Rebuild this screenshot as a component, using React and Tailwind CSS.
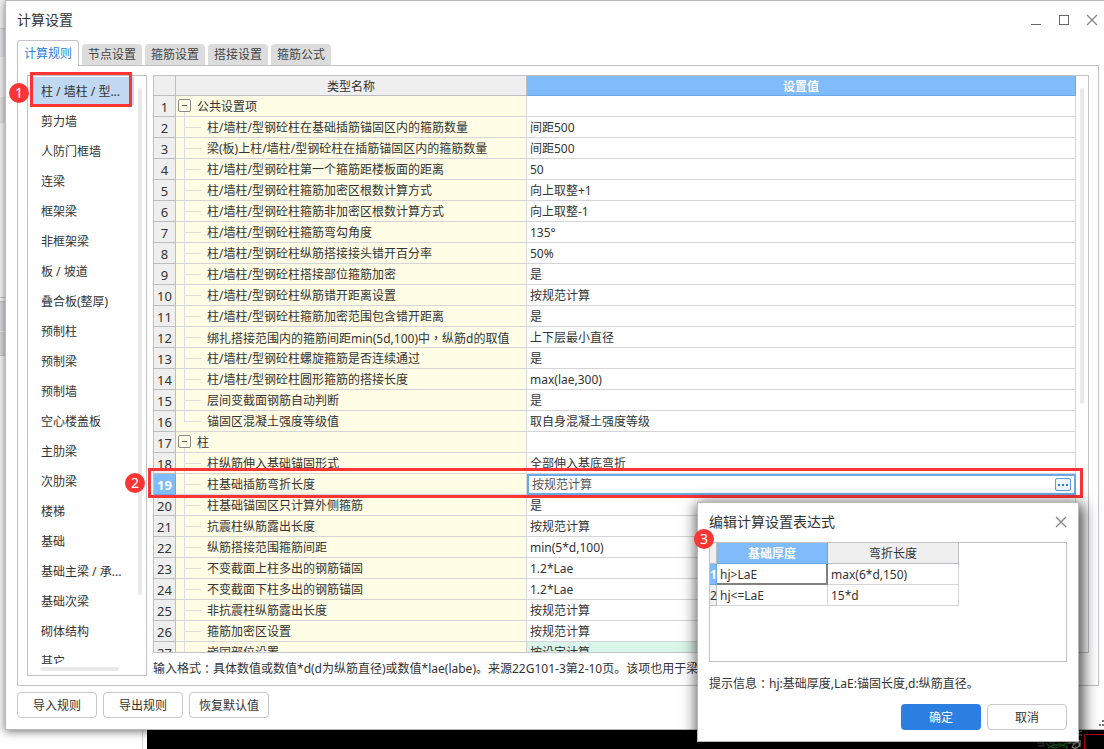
import React, { useState } from "react";

const TABS = ["计算规则", "节点设置", "箍筋设置", "搭接设置", "箍筋公式"];

const CATEGORIES = [
  "柱 / 墙柱 / 型...",
  "剪力墙",
  "人防门框墙",
  "连梁",
  "框架梁",
  "非框架梁",
  "板 / 坡道",
  "叠合板(整厚)",
  "预制柱",
  "预制梁",
  "预制墙",
  "空心楼盖板",
  "主肋梁",
  "次肋梁",
  "楼梯",
  "基础",
  "基础主梁 / 承...",
  "基础次梁",
  "砌体结构",
  "其它",
];

// sits in the middle of its box only in the TC face
const Punct = ({ children }) => <span className="font-['Noto_Sans_CJK_TC',sans-serif]">{children}</span>;

const ROWS = [
  { name: "公共设置项", group: true },
  { name: "柱/墙柱/型钢砼柱在基础插筋锚固区内的箍筋数量", value: "间距500" },
  { name: "梁(板)上柱/墙柱/型钢砼柱在插筋锚固区内的箍筋数量", value: "间距500" },
  { name: "柱/墙柱/型钢砼柱第一个箍筋距楼板面的距离", value: "50" },
  { name: "柱/墙柱/型钢砼柱箍筋加密区根数计算方式", value: "向上取整+1" },
  { name: "柱/墙柱/型钢砼柱箍筋非加密区根数计算方式", value: "向上取整-1" },
  { name: "柱/墙柱/型钢砼柱箍筋弯勾角度", value: "135°" },
  { name: "柱/墙柱/型钢砼柱纵筋搭接接头错开百分率", value: "50%" },
  { name: "柱/墙柱/型钢砼柱搭接部位箍筋加密", value: "是" },
  { name: "柱/墙柱/型钢砼柱纵筋错开距离设置", value: "按规范计算" },
  { name: "柱/墙柱/型钢砼柱箍筋加密范围包含错开距离", value: "是" },
  {
    name: (
      <>
        绑扎搭接范围内的箍筋间距min(5d,100)中<Punct>，</Punct>纵筋d的取值
      </>
    ),
    value: "上下层最小直径",
  },
  { name: "柱/墙柱/型钢砼柱螺旋箍筋是否连续通过", value: "是" },
  { name: "柱/墙柱/型钢砼柱圆形箍筋的搭接长度", value: "max(lae,300)" },
  { name: "层间变截面钢筋自动判断", value: "是" },
  { name: "锚固区混凝土强度等级值", value: "取自身混凝土强度等级", last: true },
  { name: "柱", group: true },
  { name: "柱纵筋伸入基础锚固形式", value: "全部伸入基底弯折" },
  { name: "柱基础插筋弯折长度", value: "按规范计算", active: true },
  { name: "柱基础锚固区只计算外侧箍筋", value: "是" },
  { name: "抗震柱纵筋露出长度", value: "按规范计算" },
  { name: "纵筋搭接范围箍筋间距", value: "min(5*d,100)" },
  { name: "不变截面上柱多出的钢筋锚固", value: "1.2*Lae" },
  { name: "不变截面下柱多出的钢筋锚固", value: "1.2*Lae" },
  { name: "非抗震柱纵筋露出长度", value: "按规范计算" },
  { name: "箍筋加密区设置", value: "按规范计算" },
  { name: "嵌固部位设置", value: "按设定计算", changed: true },
];

const CloseIcon = () => (
  <svg width="12" height="12" viewBox="0 0 12 12" fill="none" stroke="#858585" strokeWidth="1.3">
    <path d="M1 1 L11 11 M11 1 L1 11" />
  </svg>
);

const Badge = ({ n, className }) => (
  <span
    className={`absolute z-20 flex size-5 items-center justify-center rounded-full bg-[#fb3434] text-sm leading-none text-white ${className}`}
  >
    {n}
  </span>
);

const TitleBar = () => (
  <header className="flex h-[39px] shrink-0 items-center justify-between pb-0.5 pl-[11px] pr-1.5">
    <h1 className="text-sm">计算设置</h1>
    <div className="flex items-center gap-4">
      <button type="button" aria-label="最小化">
        <svg width="12" height="12" viewBox="0 0 12 12" stroke="#666" fill="none">
          <path d="M1 10.5 H11" />
        </svg>
      </button>
      <button type="button" aria-label="最大化">
        <svg width="12" height="12" viewBox="0 0 12 12" stroke="#666" fill="none">
          <rect x="1.5" y="1.5" width="9" height="9" />
        </svg>
      </button>
      <button type="button" aria-label="关闭">
        <CloseIcon />
      </button>
    </div>
  </header>
);

const Tabs = () => {
  const [tab, setTab] = useState(TABS[0]);

  return (
    <nav className="relative z-10 -mb-px flex h-[26px] shrink-0 items-end gap-[3px] pl-[11px]">
      {TABS.map((item) => (
        <button
          key={item}
          type="button"
          onClick={() => setTab(item)}
          className={
            item === tab
              ? "h-[26px] w-[62px] rounded-t border border-b-0 border-[#c3c3c7] bg-white text-[#2b7fe0]"
              : "mb-px h-[21px] w-[60px] rounded-t bg-[#dcdcdc] text-[#444]"
          }
        >
          {item}
        </button>
      ))}
    </nav>
  );
};

const Sidebar = () => {
  const [selected, setSelected] = useState(0);

  return (
    <aside className="relative flex w-[120px] shrink-0 flex-col border border-[#c3c3c7]">
      <div className="flex min-h-0 flex-1">
        <ul className="min-w-0 flex-1 overflow-hidden pl-[5px]">
          {CATEGORIES.map((item, i) => (
            <li key={item} className="flex h-[30px] items-center">
              <button
                type="button"
                onClick={() => setSelected(i)}
                className={`h-7 w-full whitespace-nowrap pl-2 pt-0.5 text-left ${
                  i === selected ? "bg-[#c0d8f1]" : ""
                }`}
              >
                {item}
              </button>
            </li>
          ))}
        </ul>
        <div className="w-3 pl-1 pt-3">
          <div className="h-[88%] w-1 rounded-full bg-[#e9e9e9]" />
        </div>
      </div>
      <div className="h-[11px] pl-3 pt-[3px]">
        <div className="h-1 w-[79px] rounded-full bg-[#e9e9e9]" />
      </div>
      <div className="pointer-events-none absolute -top-1 left-0.5 h-[35px] w-[102px] border-3 border-[#fb3434]" />
      <Badge n="1" className="-left-[19px] top-[7px]" />
    </aside>
  );
};

const TreeCell = ({ row }) =>
  row.group ? (
    <div className="flex h-5 items-center pl-0.5">
      <div className="flex h-5 w-[13px] flex-col items-center pt-[3px]">
        <button
          type="button"
          aria-label="折叠"
          className="flex size-[13px] shrink-0 items-center justify-center rounded-xs border border-[#8a8a8a]"
        >
          <span className="h-px w-[5px] bg-[#555]" />
        </button>
        <span className="w-px flex-1 bg-[#dedee2]" />
      </div>
      <span className="pl-1.5 pt-0.5">{row.name}</span>
    </div>
  ) : (
    <div className="flex h-5 items-center pl-2">
      <span className="flex h-5 w-[17px] shrink-0 flex-col">
        <span className="h-[11px] border-b border-l border-[#dedee2]" />
        {!row.last && <span className="flex-1 border-l border-[#dedee2]" />}
      </span>
      <span className="pl-1.5 pt-0.5">{row.name}</span>
    </div>
  );

const ValueCell = ({ row }) => {
  const [value, setValue] = useState(row.value);

  if (!row.active) return <div className="px-[3px] pt-0.5">{row.value}</div>;

  return (
    <div className="flex h-[21px] items-center border-2 border-[#6aa9e8] bg-white px-[3px]">
      <input
        type="text"
        aria-label={row.name}
        value={value}
        onChange={(e) => setValue(e.target.value)}
        className="min-w-0 flex-1 text-[#555] outline-none"
      />
      <button
        type="button"
        aria-label="编辑表达式"
        className="flex h-[13px] w-4 items-center justify-center gap-0.5 rounded-xs border border-[#5b9fe6] bg-[#eef5fd]"
      >
        <span className="size-0.5 bg-[#2b7fe0]" />
        <span className="size-0.5 bg-[#2b7fe0]" />
        <span className="size-0.5 bg-[#2b7fe0]" />
      </button>
    </div>
  );
};

const SettingsTable = () => (
  <div className="relative flex min-h-0 flex-1 border border-[#c3c3c7]">
    <div className="min-w-0 flex-1 overflow-hidden">
      <table className="w-full table-fixed border-separate border-spacing-0">
        <colgroup>
          <col className="w-[22px]" />
          <col className="w-[351px]" />
          <col />
        </colgroup>
        <thead>
          <tr className="h-5">
            <th className="border-b border-r border-[#bdbdc1] bg-[#efefef] p-0" />
            <th className="border-b border-r border-[#bdbdc1] bg-[#efefef] p-0 pt-0.5 font-normal">类型名称</th>
            <th className="border-b border-r border-[#6aa9e8] bg-[#80bbfb] p-0 pt-0.5 font-bold text-white">设置值</th>
          </tr>
        </thead>
        <tbody>
          {ROWS.map((row, i) => (
            <tr key={i} className="h-[21px]">
              <th
                className={`border-b border-r p-0 pt-0.5 text-[13px] leading-4 ${
                  row.active
                    ? "border-[#6aa9e8] bg-[#80bbfb] font-bold text-white"
                    : "border-[#bdbdc1] bg-[#efefef] font-normal"
                }`}
              >
                {i + 1}
              </th>
              <td className="overflow-hidden whitespace-nowrap border-b border-r border-[#d5d5d8] bg-[#fffde6] p-0">
                <TreeCell row={row} />
              </td>
              <td
                className={`whitespace-nowrap p-0 ${row.active ? "" : "border-b border-r border-[#d5d5d8]"} ${
                  row.changed ? "bg-[#daf5e9]" : ""
                }`}
              >
                <ValueCell row={row} />
              </td>
            </tr>
          ))}
        </tbody>
      </table>
    </div>
    <div className="w-3 pl-1 pt-3">
      <div className="h-[56%] w-1 rounded-full bg-[#e9e9e9]" />
    </div>
    <div className="pointer-events-none absolute -left-1.5 -right-[-5px] top-[392px] h-[30px] border-3 border-[#fb3434]" />
    <Badge n="2" className="-left-[29px] top-[397px]" />
  </div>
);

const FooterButton = ({ children }) => (
  <button type="button" className="h-[26px] w-20 rounded border border-[#c8c8cc] bg-white pt-0.5">
    {children}
  </button>
);

const ExpressionDialog = () => (
  <section
    role="dialog"
    aria-label="编辑计算设置表达式"
    className="absolute bottom-[7px] right-[25px] z-30 w-[382px] border border-[#b9b9b9] bg-white px-[11px] pb-[11px] shadow-[2px_4px_14px_2px_rgba(0,0,0,0.75)]"
  >
    <header className="flex h-[39px] items-center justify-between pb-0.5">
      <h2 className="text-sm">编辑计算设置表达式</h2>
      <button type="button" aria-label="关闭">
        <CloseIcon />
      </button>
    </header>
    <div className="h-[120px] border border-[#c3c3c7]">
      <table className="w-[249px] table-fixed border-separate border-spacing-0">
        <colgroup>
          <col className="w-[7px]" />
          <col className="w-[111px]" />
          <col className="w-[131px]" />
        </colgroup>
        <thead>
          <tr className="h-[21px]">
            <th className="border-b border-r border-[#bdbdc1] bg-[#efefef] p-0" />
            <th className="border-b border-r border-[#6aa9e8] bg-[#80bbfb] p-0 pt-0.5 font-bold text-white">基础厚度</th>
            <th className="border-b border-r border-[#bdbdc1] bg-[#efefef] p-0 pt-0.5 font-normal">弯折长度</th>
          </tr>
        </thead>
        <tbody>
          <tr className="h-[21px]">
            <th className="border-b border-r border-[#6aa9e8] bg-[#80bbfb] p-0 pt-0.5 font-bold text-white">1</th>
            <td className="border-b-2 border-r-2 border-[#808080] p-0 pl-[3px] pt-0.5">hj&gt;LaE</td>
            <td className="border-b border-r border-[#d5d5d8] p-0 pl-[3px] pt-0.5">max(6*d,150)</td>
          </tr>
          <tr className="h-[21px]">
            <th className="border-b border-r border-[#bdbdc1] bg-[#efefef] p-0 pt-0.5 font-normal">2</th>
            <td className="border-b border-r border-[#d5d5d8] p-0 pl-[3px] pt-0.5">hj&lt;=LaE</td>
            <td className="border-b border-r border-[#d5d5d8] p-0 pl-[3px] pt-0.5">15*d</td>
          </tr>
        </tbody>
      </table>
    </div>
    <p className="flex h-[42px] items-center whitespace-nowrap pt-0.5">
      提示信息
      <Punct>：</Punct>
      hj:基础厚度,LaE:锚固长度,d:纵筋直径。
    </p>
    <div className="flex justify-end gap-1.5">
      <button type="button" className="h-[26px] w-20 rounded bg-[#2b7fe0] pt-0.5 text-white">
        确定
      </button>
      <FooterButton>取消</FooterButton>
    </div>
    <Badge n="3" className="-left-1 top-[26px]" />
  </section>
);

// edge of the main window that shows left of the settings dialog
const BackgroundEdge = () => (
  <div className="flex w-[5px] shrink-0 flex-col bg-[#f8f8f8]">
    <div className="h-[29px] border-b border-[#cfcfd2] bg-[#f3f3f4]" />
    <div className="h-7 bg-[#e4e4e7]" />
    <div className="h-10 bg-[#f3f3f4]" />
    <div className="h-[26px] bg-[#e4e4e5]" />
    <div className="h-[175px] border-b border-[#c4c4c7]" />
    <div className="mt-[3px] h-[31px] border-y border-t-[#c4c4c7] border-b-[#f0f0f0] bg-[#dadadd]" />
    <div className="h-6 border-b border-[#c4c4c7] bg-[#dadada]" />
  </div>
);

const CadCorner = () => (
  <svg width="70" height="19" viewBox="0 0 70 19" fill="none">
    <path d="M3 13 h7 v3 h-6 M15 13 h6 M17 15 h8 M30 14 l5 -3" stroke="#777" />
    <path d="M12 13 q6 7 13 4 q6 -4 11 -4 M14 18 q8 -6 20 -1 M24 13 q8 2 9 6 M45 1 q-5 4 -3 17" stroke="#157a22" strokeWidth="1.3" />
    <path d="M44 2 l4 -1 M45 5 h3 M42 9 l5 2 M34 13 h6 l-2 5 M40 14 q6 -4 5 2 q-3 4 -7 1 M46 10 v7" stroke="#b5b5b5" strokeWidth="1.2" />
    <path d="M50.5 19 V4.5 H70" stroke="#e00000" />
  </svg>
);

const App = () => (
  <div className="relative flex h-screen flex-col overflow-hidden bg-white font-['Noto_Sans','Noto_Sans_CJK_SC',sans-serif] text-xs text-[#333]">
    <div className="flex min-h-0 flex-1">
      <BackgroundEdge />
      <main className="relative z-10 flex min-w-0 flex-1 flex-col border border-r-0 border-[#b9b9b9] bg-white shadow-[0_2px_8px_rgba(0,0,0,0.5)]">
        <TitleBar />
        <Tabs />
        <div className="ml-[11px] mr-[5px] flex min-h-0 flex-1 gap-1.5 border border-[#c3c3c7] p-[9px]">
          <Sidebar />
          <div className="-mb-[9px] flex min-w-0 flex-1 flex-col">
            <SettingsTable />
            <p className="flex h-8 shrink-0 items-center overflow-hidden whitespace-nowrap">
              输入格式
              <Punct>：</Punct>
              具体数值或数值*d(d为纵筋直径)或数值*lae(labe)。来源22G101-3第2-10页。该项也用于梁
            </p>
          </div>
        </div>
        <footer className="flex shrink-0 items-end justify-between pb-[11px] pl-[11px] pt-1.5">
          <div className="flex gap-1.5">
            <FooterButton>导入规则</FooterButton>
            <FooterButton>导出规则</FooterButton>
            <FooterButton>恢复默认值</FooterButton>
          </div>
          {/* resize grip */}
          <svg className="-mb-2" width="5" height="6" viewBox="0 0 5 6" fill="#77777c">
            <path d="M0 4h2v2H0z M3 4h2v2H3z M3 0h2v2H3z" />
          </svg>
        </footer>
      </main>
    </div>
    <div className="flex h-[19px] shrink-0">
      <div className="w-[143px] border-r border-[#d5d5d8]" />
      <div className="ml-1 flex flex-1 justify-end bg-black">
        <CadCorner />
      </div>
    </div>
    <ExpressionDialog />
  </div>
);

export default App;
